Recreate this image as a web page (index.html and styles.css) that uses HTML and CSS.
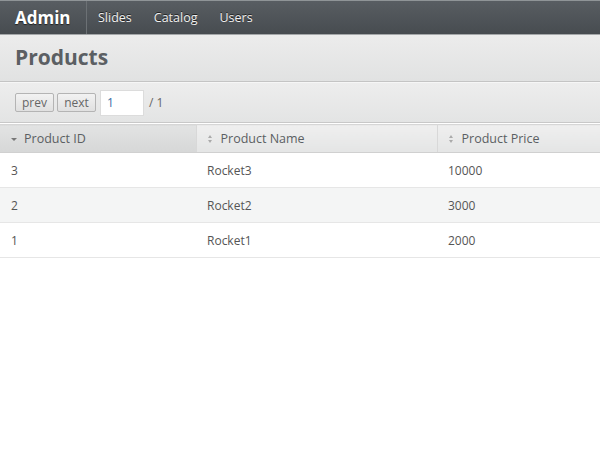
FILE: index.html
```html
<!DOCTYPE html>
<html>
<head>
<meta charset="utf-8">
<link rel="stylesheet" href="styles.css">
</head>
<body>
<div class="navbar">
  <div class="brand">Admin</div>
  <ul class="nav">
    <li>Slides</li>
    <li>Catalog</li>
    <li>Users</li>
  </ul>
</div>
<div class="header"><h1>Products</h1></div>
<div class="toolbar">
  <button class="btn">prev</button>
  <button class="btn">next</button>
  <input class="page" type="text" value="1">
  <span class="total">/ 1</span>
</div>
<table class="grid">
  <thead>
    <tr>
      <th class="sorted c1"><span class="arrow down"></span>Product ID</th>
      <th class="c2"><span class="updown"></span>Product Name</th>
      <th class="c3"><span class="updown"></span>Product Price</th>
    </tr>
  </thead>
  <tbody>
    <tr><td>3</td><td>Rocket3</td><td>10000</td></tr>
    <tr class="alt"><td>2</td><td>Rocket2</td><td>3000</td></tr>
    <tr><td>1</td><td>Rocket1</td><td>2000</td></tr>
  </tbody>
</table>
</body>
</html>
```
FILE: styles.css
```css
* { box-sizing: border-box; }
html, body { margin: 0; padding: 0; background: #fff; }
body { font-family: "Open Sans", "Noto Sans", sans-serif; color: #555; }

.navbar {
  height: 35px;
  display: flex;
  align-items: stretch;
  background: linear-gradient(#585d62, #474c50);
  border-top: 1px solid #8f9497;
  border-bottom: 1px solid #a4a7a9;
}
.brand {
  color: #fff;
  font-size: 17px;
  font-weight: 700;
  padding: 0 15px 0 15px;
  width: 87px;
  display: flex;
  align-items: center;
  border-right: 1px solid #6c7175;
  text-shadow: 0 1px 1px #222;
}
.nav {
  list-style: none;
  margin: 0;
  padding: 0 0 0 11px;
  display: flex;
  align-items: center;
}
.nav li {
  color: #f0f0f0;
  font-size: 12.5px;
  margin-right: 22px;
  text-shadow: 0 -1px 0 #222;
}

.header {
  height: 47px;
  background: linear-gradient(#ececec, #e1e2e2);
  border-bottom: 1px solid #c4c4c4;
  display: flex;
  align-items: center;
  padding: 0 15px 2px;
}
.header h1 {
  margin: 0;
  font-size: 21px;
  font-weight: 700;
  color: #5b5f63;
}

.toolbar {
  height: 41px;
  background: linear-gradient(#ededed, #e3e4e4);
  border-top: 1px solid #f6f6f6;
  border-bottom: 1px solid #c8c8c8;
  display: flex;
  align-items: center;
  padding: 0 15px;
}
.btn {
  font-family: inherit;
  font-size: 12px;
  color: #666;
  width: 39px;
  height: 19px;
  padding: 0;
  margin-right: 3px;
  background: linear-gradient(#f2f2f2, #e0e0e0);
  border: 1px solid #b4b4b4;
  border-radius: 2px;
  line-height: 17px;
  text-align: center;
}
.page {
  font-family: inherit;
  font-size: 12px;
  color: #3b6ea5;
  width: 44px;
  height: 26px;
  margin-left: 1px;
  padding: 0 6px;
  border: 1px solid #dcdcdc;
  background: #fff;
  outline: none;
}
.total {
  font-size: 12px;
  color: #666;
  margin-left: 5px;
}

.grid {
  width: 100%;
  border-collapse: collapse;
  margin-top: 1px;
  border-top: 1px solid #d6d6d6;
}
.grid th {
  height: 28px;
  text-align: left;
  font-weight: 400;
  font-size: 12.5px;
  color: #5b5f63;
  background: linear-gradient(#efefef, #e4e5e5);
  border-right: 1px solid #d8d8d8;
  border-bottom: 1px solid #d0d0d0;
  padding: 0 0 1px 11px;
  white-space: nowrap;
}
.grid th.sorted { background: linear-gradient(#e2e3e3, #d6d7d7); }
.grid th.c1 { width: 196px; }
.grid th.c2 { width: 241px; }
.grid th:last-child { border-right: none; }
.grid td {
  height: 35px;
  font-size: 12px;
  color: #555;
  padding: 0 0 0 11px;
  border-bottom: 1px solid #e6e6e6;
}
.grid tr.alt td { background: #f4f5f5; }

.arrow.down {
  display: inline-block;
  width: 0; height: 0;
  border-left: 3px solid transparent;
  border-right: 3px solid transparent;
  border-top: 3px solid #777;
  margin-right: 7px;
  vertical-align: 2px;
}
.updown {
  display: inline-block;
  width: 5px; height: 8px;
  margin-right: 8px;
  vertical-align: 0;
  position: relative;
}
.updown::before, .updown::after {
  content: "";
  position: absolute;
  left: 0;
  border-left: 2.5px solid transparent;
  border-right: 2.5px solid transparent;
}
.updown::before { top: 0; border-bottom: 3px solid #aaa; }
.updown::after { bottom: 0; border-top: 3px solid #aaa; }
```
